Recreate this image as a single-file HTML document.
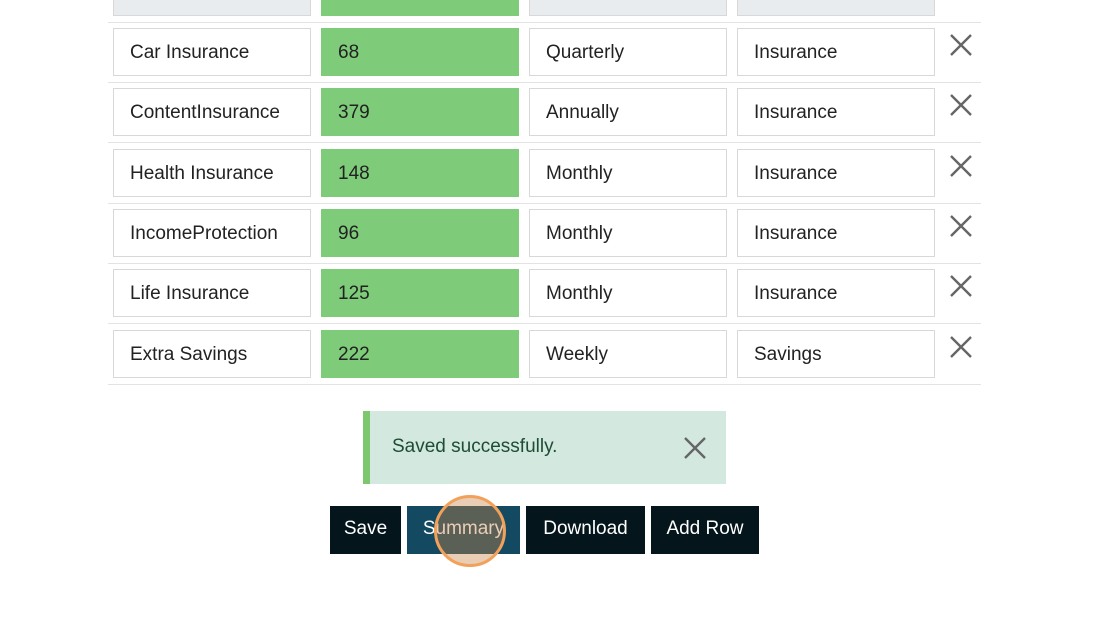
<!DOCTYPE html>
<html><head><meta charset="utf-8"><style>
body{margin:0;width:1120px;height:633px;background:#fff;font-family:"Liberation Sans",sans-serif;position:relative;overflow:hidden}
.line{position:absolute;left:108px;width:873px;height:1px;background:#e3e3e3}
.in{position:absolute;height:46px;border:1px solid #d8d8d8;box-sizing:content-box;font-size:19px;color:#222;line-height:47px;padding-left:16px;background:#fff}
.g{background:#7ecc7a;border-color:#7ecc7a}
.top{background:#e8ecef;border-color:#d8d8d8}
.x{position:absolute;width:22px;height:22px}
.btn{position:absolute;top:506px;height:48px;line-height:46px;color:#fff;font-size:19px;text-align:center;background:#04151c}
</style></head><body>
<div id="rows"></div>
<div style="position:absolute;left:363px;top:411px;width:363px;height:73px;background:#d3e8de"></div>
<div style="position:absolute;left:363px;top:411px;width:7px;height:73px;background:#7dc86f"></div>
<div style="position:absolute;left:392px;top:436px;font-size:19px;color:#1d4d36">Saved successfully.</div>
<svg class="x" style="left:684px;top:437px" viewBox="0 0 22 22"><path d="M1 1L21 21M21 1L1 21" stroke="#666" stroke-width="2.4"/></svg>
<div class="btn" style="left:330px;width:71px">Save</div>
<div class="btn" style="left:407px;width:113px;background:#134a61">Summary</div>
<div class="btn" style="left:526px;width:119px">Download</div>
<div class="btn" style="left:651px;width:108px">Add Row</div>
<div style="position:absolute;left:434px;top:495px;width:66px;height:66px;border:3px solid #f2a15a;border-radius:50%;background:rgba(200,130,70,0.4)"></div>
<script>
var d=[["Car Insurance","68","Quarterly","Insurance"],["ContentInsurance","379","Annually","Insurance"],["Health Insurance","148","Monthly","Insurance"],["IncomeProtection","96","Monthly","Insurance"],["Life Insurance","125","Monthly","Insurance"],["Extra Savings","222","Weekly","Savings"]];
var xs=[113,321,529,737],h="";
h+='<div class="in top" style="left:113px;top:-32px;width:180px"></div><div class="in g" style="left:321px;top:-32px;width:180px"></div><div class="in top" style="left:529px;top:-32px;width:180px"></div><div class="in top" style="left:737px;top:-32px;width:180px"></div><div class="line" style="top:22px"></div>';
d.forEach(function(r,i){var y=28+i*60.3;r.forEach(function(t,j){h+='<div class="in'+(j==1?' g':'')+'" style="left:'+xs[j]+'px;top:'+y+'px;width:180px">'+t+'</div>';});
h+='<svg class="x" style="left:950px;top:'+(y+6)+'px" viewBox="0 0 22 22"><path d="M1 1L21 21M21 1L1 21" stroke="#666" stroke-width="2.4"/></svg>';
h+='<div class="line" style="top:'+(82+i*60.3)+'px"></div>';});
document.getElementById('rows').innerHTML=h;
</script>
</body></html>
